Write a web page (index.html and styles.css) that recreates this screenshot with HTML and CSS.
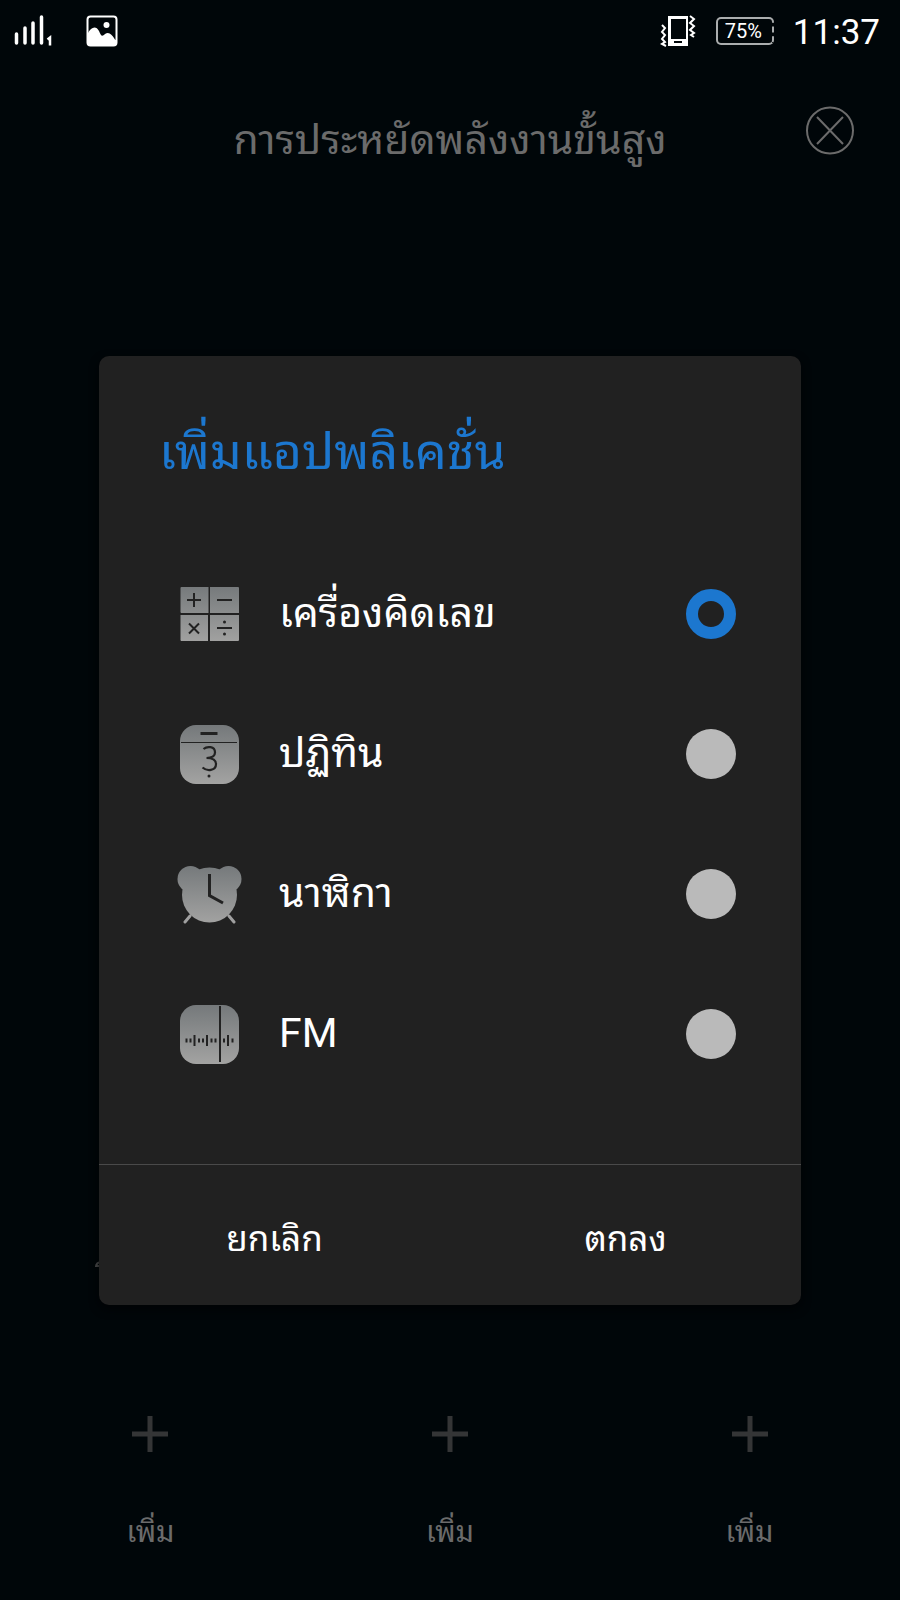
FILE: index.html
```html
<!DOCTYPE html>
<html lang="th">
<head>
<meta charset="utf-8">
<meta name="viewport" content="width=device-width, initial-scale=1">
<title>การประหยัดพลังงานขั้นสูง</title>
<link rel="stylesheet" href="styles.css">
</head>
<body>
<div class="screen">
  <div class="status">
    <svg class="signal" width="40" height="34" viewBox="0 0 40 34" aria-hidden="true">
      <g stroke="#fff" stroke-width="3.500" stroke-linecap="round"><path d="M3.500 20v9M12 14v15M20 9v20M28.500 3v26"/></g>
      <path d="M34.500 25.500l2.500-2v8" fill="none" stroke="#fff" stroke-width="2.500"/>
    </svg>
    <svg width="32" height="32" viewBox="0 0 32 32" aria-hidden="true">
      <rect x="1.500" y="1.500" width="29" height="29" rx="3" fill="none" stroke="#fff" stroke-width="2"/>
      <circle cx="20.500" cy="10" r="3" fill="#fff"/>
      <path d="M2 18C5 12 10 10 13 16c2 5 3 6 6 3 4-3 7 1 9 4 1 2 2 2 2 2v4q0 1-1 1H3q-1 0-1-1z" fill="#fff"/>
    </svg>
    <svg class="vibrate" width="36" height="32" viewBox="0 0 36 32" aria-hidden="true">
      <path d="M8 1h20v30H8zM11 4v20h15V4zM14 26v2h8v-2z" fill="#fff" fill-rule="evenodd"/>
      <path d="M2 10l3 3-3 4 3 3-3 4 3 3-3 2 4 2M30 1l4 3-4 4 4 3-4 4 4 3-3 2 3 2" fill="none" stroke="#fff" stroke-width="2"/>
    </svg>
    <span class="battery">75%</span>
    <time class="time">11:37</time>
  </div>

  <header class="header">
    <h1 class="heading">การประหยัดพลังงานขั้นสูง</h1>
    <button class="close" type="button" aria-label="ปิด">
      <svg width="50" height="50" viewBox="0 0 50 50" fill="none" stroke="#6b6b6b" stroke-width="2"><circle cx="25" cy="24.500" r="23"/><path d="M12 11l26 27M38 11L12 38"/></svg>
    </button>
  </header>

  <main class="stage">
    <svg class="ring" width="40" height="40" viewBox="0 0 40 40" aria-hidden="true"><circle cx="20" cy="20" r="18" fill="none" stroke="#4c4c4c" stroke-width="2"/></svg>
    <svg class="hook" width="10" height="10" viewBox="0 0 10 10" aria-hidden="true"><path d="M2 7Q2 2 8 2M2 6h3" fill="none" stroke="#555" stroke-width="2"/></svg>
    <form class="dialog" role="dialog" aria-labelledby="dialog-title">
      <h2 class="title" id="dialog-title">เพิ่มแอปพลิเคชั่น</h2>
      <div class="options">
        <label class="option">
          <svg class="icon" width="66" height="60" viewBox="0 0 66 60" aria-hidden="true">
            <defs><linearGradient id="metal" gradientUnits="userSpaceOnUse" x1="0" y1="0" x2="0" y2="60"><stop offset="0" stop-color="#74787a"/><stop offset="1" stop-color="#a3a3a2"/></linearGradient></defs>
            <path d="M5.500 3h27v26h-27a1 1 0 0 1-1-1V4a1 1 0 0 1 1-1zM34 3h28a1 1 0 0 1 1 1v25H34zM4.500 31H32v26H5.500a1 1 0 0 1-1-1zM34 31h29v25a1 1 0 0 1-1 1H34z" fill="url(#metal)"/>
            <path d="M11 16h14M18 9v14M41 16h15M13 39.500l10 10M23 39.500l-10 10M41 44h15" stroke="#222" stroke-width="2"/>
            <circle cx="48.500" cy="38" r="1.500" fill="#222"/><circle cx="48.500" cy="50" r="1.500" fill="#222"/>
          </svg>
          <span class="name">เครื่องคิดเลข</span>
          <input class="radio" type="radio" name="app" checked>
        </label>
        <label class="option">
          <svg class="icon" width="66" height="60" viewBox="0 0 66 60" aria-hidden="true">
            <rect x="4" y="1" width="59" height="59" rx="16" fill="url(#metal)"/>
            <path d="M24.500 9.500h17" stroke="#222" stroke-width="3"/>
            <path d="M5 18.500h56" stroke="#222"/>
            <path d="M27.500 25C31 22 39 22 39 28.500C39 32.500 36 34 30.500 34C37 34 40 36.500 40 40C40 47 31 47.500 26.500 43.500" fill="none" stroke="#222" stroke-width="2.200"/>
            <circle cx="33" cy="52" r="1.500" fill="#222"/>
          </svg>
          <span class="name">ปฏิทิน</span>
          <input class="radio" type="radio" name="app">
        </label>
        <label class="option">
          <svg class="icon" width="66" height="60" viewBox="0 0 66 60" aria-hidden="true">
            <g fill="url(#metal)"><circle cx="14.500" cy="15" r="13"/><circle cx="52.500" cy="15" r="13"/><circle cx="33.500" cy="31" r="27.500"/></g>
            <path d="M14 52l-5 6M53 52l5 6" stroke="#a0a0a0" stroke-width="3" stroke-linecap="round"/>
            <path d="M33.500 10v21.500L47 39" fill="none" stroke="#222" stroke-width="3"/>
          </svg>
          <span class="name">นาฬิกา</span>
          <input class="radio" type="radio" name="app">
        </label>
        <label class="option">
          <svg class="icon" width="66" height="60" viewBox="0 0 66 60" aria-hidden="true">
            <rect x="4" y="1" width="59" height="59" rx="16" fill="url(#metal)"/>
            <path d="M44 2v56" stroke="#222" stroke-width="2"/>
            <path d="M10.500 34.500v4M14.500 34.500v4M18.500 31v11M23 34.500v4M27 34.500v4M31 31v11M35.500 34.500v4M39.500 34.500v4M48 34.500v4M52 31v11M56.500 34.500v4" stroke="#222" stroke-width="2"/>
          </svg>
          <span class="name">FM</span>
          <input class="radio" type="radio" name="app">
        </label>
      </div>
      <div class="actions">
        <button class="action" type="button">ยกเลิก</button>
        <button class="action" type="button">ตกลง</button>
      </div>
    </form>
    <div class="slots">
      <button class="slot" type="button"><svg width="36" height="36" viewBox="0 0 36 36" aria-hidden="true"><path d="M0 18h36M18 0v36" stroke="#343536" stroke-width="5"/></svg><span>เพิ่ม</span></button>
      <button class="slot" type="button"><svg width="36" height="36" viewBox="0 0 36 36" aria-hidden="true"><path d="M0 18h36M18 0v36" stroke="#343536" stroke-width="5"/></svg><span>เพิ่ม</span></button>
      <button class="slot" type="button"><svg width="36" height="36" viewBox="0 0 36 36" aria-hidden="true"><path d="M0 18h36M18 0v36" stroke="#343536" stroke-width="5"/></svg><span>เพิ่ม</span></button>
    </div>
  </main>
</div>
</body>
</html>
```
FILE: styles.css
```css
* { box-sizing: border-box; }
body {
  margin: 0;
  background: #000609;
  color: #fff;
  font-family: Roboto, "Noto Sans Thai Looped", "Droid Sans Thai", Loma, Waree, Garuda, Umpush, Tahoma, sans-serif;
}
h1, h2 { margin: 0; font-weight: 400; }
button {
  margin: 0;
  padding: 0;
  border: 0;
  background: none;
  color: inherit;
  font: inherit;
  cursor: pointer;
}
svg { display: block; flex: none; }
.screen { display: flex; flex-direction: column; min-height: 100vh; }

.status {
  display: flex;
  align-items: center;
  height: 62px;
  padding: 0 20px 0 13px;
}
.signal { margin-right: 33px; }
.vibrate { margin-left: auto; }
.battery {
  display: flex;
  align-items: center;
  height: 28px;
  margin: 0 19px 0 20px;
  padding: 0 10px 0 7px;
  border: 2px solid #aaadae;
  border-right-style: dashed;
  border-radius: 5px;
  font-size: 20px;
}
.time { padding-top: 4px; font-size: 35px; line-height: 40px; }

.header {
  display: grid;
  grid-template-columns: 1fr auto 1fr;
  align-items: start;
  padding: 44px 45px 0;
  color: #6b6b6b;
}
.heading { grid-column: 2; padding-top: 4px; font-size: 41px; line-height: 60px; }
.close { justify-self: end; }

.stage {
  display: flex;
  flex: 1;
  flex-direction: column;
  justify-content: space-between;
  padding: 186px 11% 0;
  position: relative;
}
.dialog {
  position: relative;
  border-radius: 10px;
  background: #212121;
  box-shadow: 0 4px 10px #000305;
}
.title { padding: 60px 60px 0; color: #1c77cf; font-size: 50px; line-height: 72px; }
.options { padding: 56px 65px 60px 77px; }
.option { display: flex; align-items: center; height: 140px; cursor: pointer; }
.name { flex: 1; padding: 0 0 2px 37px; font-size: 41px; line-height: 60px; }
.radio {
  appearance: none;
  width: 50px;
  height: 50px;
  margin: 0;
  border-radius: 50%;
  background: #bababa;
}
.radio:checked { border: 12px solid #1c77cf; background: #212121; }
.actions {
  display: grid;
  grid-template-columns: 1fr 1fr;
  border-top: 1px solid #4a4a4a;
}
.action { height: 140px; font-size: 35px; }
.slots { display: grid; grid-template-columns: repeat(3, 1fr); margin: 0 -14%; padding-bottom: 48px; }
.slot {
  display: flex;
  flex-direction: column;
  align-items: center;
  gap: 60px;
  color: #6b6b6b;
  font-size: 29px;
  line-height: 40px;
}
.ring { position: absolute; top: 185px; left: 489px; }
.hook { position: absolute; top: 1090px; left: 94px; }
```
